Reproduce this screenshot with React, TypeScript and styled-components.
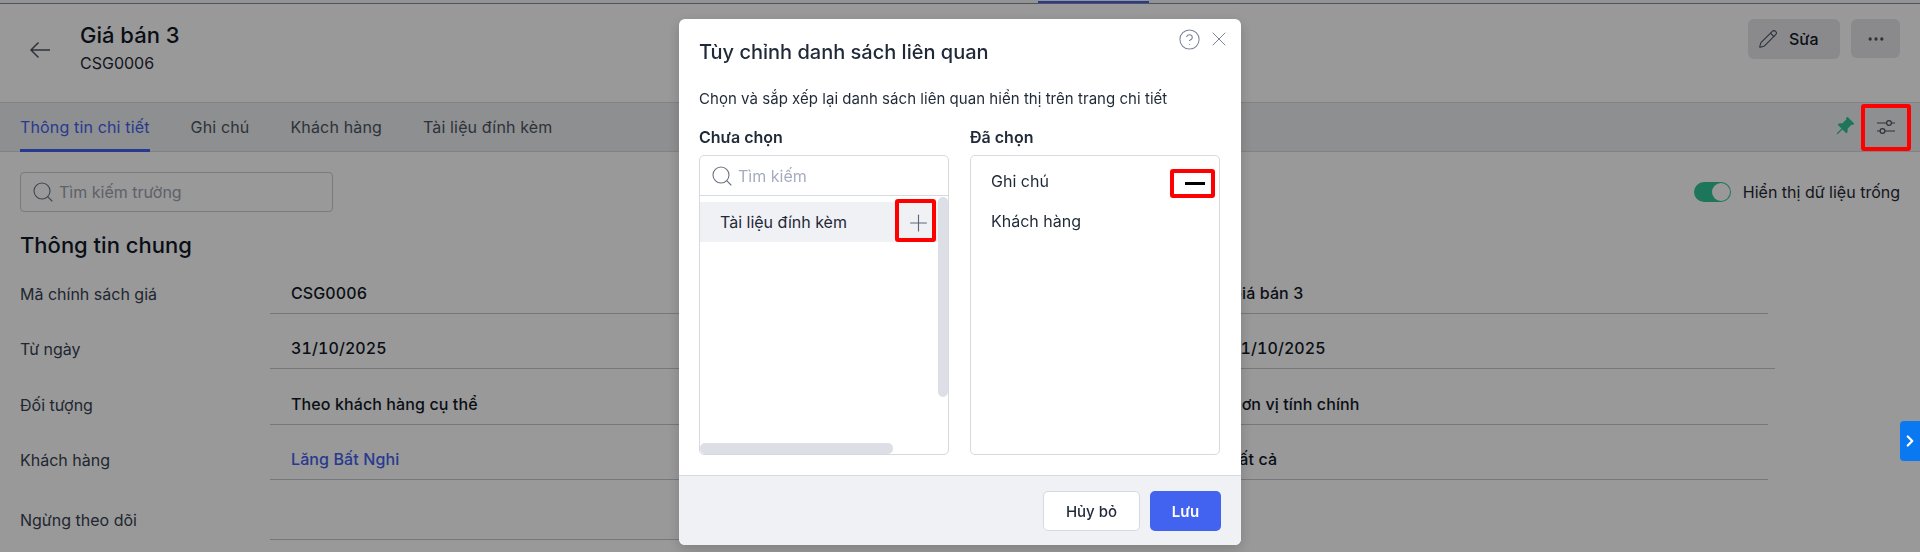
import React from "react";
import styled, { createGlobalStyle } from "styled-components";
import { Search, Pencil, Ellipsis, CircleHelp, X, Plus, ChevronRight } from "lucide-react";
import { BsPinAngleFill } from "react-icons/bs";

const Global = createGlobalStyle`
  html, body { margin: 0; padding: 0; height: 552px; overflow: hidden; background: #fff; }
  body { font-family: Inter, "Noto Sans", sans-serif; color: #1f2937; }
  * { box-sizing: border-box; }
`;

const Page = styled.div`
  position: relative;
  width: 1920px;
  height: 552px;
  overflow: hidden;
  background: #fff;
`;
const TopStrip = styled.div`
  height: 4px;
  padding: 1px 0 0 1038px;
  border-bottom: 1px solid #8a8d94;
  background: #f4f5f7;
`;
const TopMark = styled.div`
  width: 111px;
  height: 2px;
  background: #4262f0;
`;
const Header = styled.header`
  height: 99px;
  display: flex;
  align-items: flex-start;
  padding: 15px 20px 0 29px;
  border-bottom: 1px solid #d6d9df;
`;
const BackButton = styled.div`
  width: 51px;
  height: 18px;
  margin-top: 22px;
  color: #4b5563;
  display: flex;
  flex: none;
`;
const TitleBlock = styled.div`
  flex: 1;
  padding-top: 2px;
`;
const PageTitle = styled.div`
  font-size: 22px;
  font-weight: 500;
  line-height: 28px;
  color: #111827;
`;
const PageCode = styled.div`
  font-size: 16px;
  line-height: 20px;
  margin-top: 4px;
  color: #1f2937;
`;
const HeaderActions = styled.div`
  display: flex;
  gap: 11px;
`;
const EditButton = styled.div`
  width: 92px;
  height: 40px;
  border-radius: 6px;
  background: #e6e7eb;
  display: flex;
  align-items: center;
  gap: 11px;
  padding-left: 10px;
  font-size: 16px;
  font-weight: 500;
  color: #111827;
  svg { color: #4b5563; }
`;
const MoreButton = styled.div`
  width: 49px;
  height: 39px;
  border-radius: 6px;
  background: #e6e7eb;
  display: flex;
  align-items: center;
  justify-content: center;
  color: #4b5563;
`;
const TabBar = styled.nav`
  height: 49px;
  display: flex;
  align-items: stretch;
  padding-left: 20px;
  gap: 41px;
  background: #edeef1;
  border-bottom: 1px solid #d6d9df;
`;
const Tab = styled.div<{ $active?: boolean }>`
  display: flex;
  align-items: center;
  height: 49px;
  font-size: 16px;
  letter-spacing: 0.15px;
  color: ${(p) => (p.$active ? "#4262f0" : "#4b5563")};
  border-bottom: 3px solid ${(p) => (p.$active ? "#4262f0" : "transparent")};
  padding-top: 2px;
`;
const TabTools = styled.div`
  margin-left: auto;
  display: flex;
  align-items: center;
  padding-right: 9px;
`;
const PinIcon = styled.div`
  display: flex;
  color: #33c596;
  margin-right: 6px;
  padding-bottom: 2px;
`;
const SliderTool = styled.div`
  width: 50px;
  height: 47px;
  display: flex;
  align-items: center;
  justify-content: center;
  color: #4b5563;
  margin-bottom: 1px;
`;
const RedBox = styled.div`
  position: absolute;
  border: 4px solid #ff0000;
  border-radius: 3px;
  pointer-events: none;
`;
const ToolMark = styled(RedBox)`
  position: fixed;
  left: 1861px;
  top: 104px;
  width: 50px;
  height: 47px;
`;
const Content = styled.main`
  padding: 20px 20px 0;
`;
const Toolbar = styled.div`
  display: flex;
  justify-content: space-between;
  align-items: center;
  height: 40px;
`;
const FieldSearch = styled.div`
  width: 313px;
  height: 40px;
  border: 1px solid #c9ccd3;
  border-radius: 4px;
  display: flex;
  align-items: center;
  gap: 4px;
  padding-left: 10px;
  font-size: 16px;
  color: #9ca3af;
  svg { color: #6b7280; }
`;
const ToggleWrap = styled.div`
  display: flex;
  align-items: center;
  gap: 12px;
  font-size: 16px;
  color: #1f2937;
`;
const Toggle = styled.div`
  width: 37px;
  height: 20px;
  border-radius: 10px;
  background: #33c596;
  display: flex;
  justify-content: flex-end;
  padding: 1px;
`;
const Knob = styled.div`
  width: 18px;
  height: 18px;
  border-radius: 50%;
  background: #fff;
`;
const SectionTitle = styled.h2`
  margin: 20px 0 0;
  font-size: 22px;
  font-weight: 500;
  line-height: 26px;
  color: #111827;
`;
const FieldGrid = styled.div`
  display: grid;
  grid-template-columns: 809px 809px;
  column-gap: 130px;
`;
const Field = styled.div<{ $tall?: boolean }>`
  display: grid;
  grid-template-columns: 250px 1fr;
  height: ${(p) => (p.$tall ? 60 : 55.5)}px;
`;
const FieldLabel = styled.div<{ $tall?: boolean }>`
  font-size: 16px;
  color: #374151;
  padding-top: ${(p) => (p.$tall ? 29 : 24.5)}px;
  line-height: 22px;
`;
const FieldValue = styled.div<{ $link?: boolean; $wide?: boolean }>`
  font-size: 16px;
  font-weight: 450;
  font-variant-numeric: tabular-nums;
  letter-spacing: 0.1px;
  line-height: 22px;
  padding: 23.5px 0 0 21px;
  color: ${(p) => (p.$link ? "#4262f0" : "#111827")};
  border-bottom: 1px solid #c5c8ce;
  margin-right: ${(p) => (p.$wide ? "-7px" : "0")};
`;
const SideTab = styled.div`
  position: fixed;
  z-index: 5;
  right: 0;
  top: 421px;
  width: 20px;
  height: 40px;
  background: #0a78f0;
  color: #fff;
  border-radius: 4px 0 0 4px;
  display: flex;
  align-items: center;
  justify-content: center;
`;
const Backdrop = styled.div`
  position: fixed;
  inset: 0;
  background: rgba(0, 0, 0, 0.4);
`;
const Modal = styled.section`
  position: fixed;
  left: 679px;
  top: 19px;
  width: 562px;
  height: 526px;
  background: #fff;
  border-radius: 6px;
  display: flex;
  flex-direction: column;
  overflow: hidden;
  box-shadow: 0 4px 14px rgba(0, 0, 0, 0.18);
`;
const ModalTools = styled.div`
  position: absolute;
  top: 8px;
  right: 10px;
  display: flex;
  align-items: center;
  gap: 6px;
  color: #7b8498;
`;
const ModalBody = styled.div`
  flex: 1;
  padding: 20px 20px 20px;
`;
const ModalTitle = styled.h3`
  margin: 0;
  font-size: 20px;
  font-weight: 500;
  line-height: 26px;
  color: #1f2937;
`;
const ModalText = styled.p`
  margin: 23px 0 0;
  font-size: 15px;
  letter-spacing: 0.04px;
  line-height: 22px;
  color: #1f2937;
`;
const Columns = styled.div`
  display: grid;
  grid-template-columns: 250px 250px;
  column-gap: 21px;
  margin-top: 16px;
`;
const Column = styled.div`
  display: flex;
  flex-direction: column;
  gap: 7px;
`;
const ColumnTitle = styled.div`
  font-size: 16px;
  font-weight: 600;
  line-height: 22px;
  color: #1f2937;
`;
const ListBox = styled.div`
  position: relative;
  height: 300px;
  border: 1px solid #d5d9e0;
  border-radius: 5px;
  overflow: hidden;
`;
const ListSearch = styled.div`
  height: 40px;
  border-bottom: 1px solid #d5d9e0;
  display: flex;
  align-items: center;
  gap: 4px;
  padding-left: 10px;
  font-size: 16px;
  color: #a5adc0;
  svg { color: #6b7280; }
`;
const AvailableRow = styled.div`
  position: relative;
  width: 238px;
  height: 40px;
  margin-top: 6px;
  padding-left: 20px;
  background: #f0f1f4;
  display: flex;
  align-items: center;
  font-size: 16px;
  color: #1f2937;
`;
const PlusMark = styled(RedBox)`
  right: 2px;
  top: -3px;
  width: 41px;
  height: 43px;
  display: flex;
  align-items: center;
  justify-content: center;
  padding: 4px 0 0 6px;
  color: #5d6678;
`;
const ScrollY = styled.div`
  position: absolute;
  right: 0;
  top: 41px;
  width: 10px;
  height: 200px;
  border-radius: 5px;
  background: #dcdfe6;
`;
const ScrollX = styled.div`
  position: absolute;
  left: 0;
  bottom: 0;
  width: 193px;
  height: 11px;
  border-radius: 5px;
  background: #dcdfe6;
`;
const SelectedList = styled.div`
  padding-top: 5px;
`;
const SelectedRow = styled.div`
  position: relative;
  height: 40px;
  padding-left: 20px;
  display: flex;
  align-items: center;
  font-size: 16px;
  color: #1f2937;
`;
const MinusMark = styled(RedBox)`
  right: 4px;
  top: 8px;
  width: 45px;
  height: 29px;
  display: flex;
  align-items: center;
  justify-content: center;
  padding-left: 4px;
`;
const MinusBar = styled.div`
  width: 20px;
  height: 3px;
  background: #000;
`;
const ModalFooter = styled.footer`
  height: 71px;
  background: #f0f1f4;
  border-top: 1px solid #d5d9e0;
  display: flex;
  justify-content: flex-end;
  gap: 10px;
  padding: 15px 20px 0 0;
`;
const CancelButton = styled.div`
  width: 97px;
  height: 40px;
  border: 1px solid #d5d9e0;
  border-radius: 5px;
  background: #fff;
  display: flex;
  align-items: center;
  justify-content: center;
  font-size: 15px;
  font-weight: 500;
  color: #1f2937;
`;
const SaveButton = styled.div`
  width: 71px;
  height: 40px;
  border-radius: 5px;
  background: #4262f0;
  display: flex;
  align-items: center;
  justify-content: center;
  font-size: 15px;
  font-weight: 600;
  color: #fff;
`;

const SlidersIcon = () => (
  <svg width="20" height="16" viewBox="0 0 20 16" fill="none" stroke="currentColor" strokeWidth="1.2">
    <path d="M1 4h10M15.5 4H19M1 12h3.5M9 12h10" />
    <circle cx="13" cy="4" r="2.4" />
    <circle cx="6.5" cy="12" r="2.4" />
  </svg>
);

const BackIcon = () => (
  <svg width="22" height="18" viewBox="0 0 22 18" fill="none" stroke="currentColor" strokeWidth="1.5">
    <path d="M21 9H2M9.5 1.5 2 9l7.5 7.5" />
  </svg>
);

const rows: { l: string; v: string; link?: boolean; rl: string; rv: string; wide?: boolean }[] = [
  { l: "Mã chính sách giá", v: "CSG0006", rl: "Tên chính sách giá", rv: "Giá bán 3" },
  { l: "Từ ngày", v: "31/10/2025", rl: "Đến ngày", rv: "31/10/2025", wide: true },
  { l: "Đối tượng", v: "Theo khách hàng cụ thể", rl: "Tính giá theo", rv: "Đơn vị tính chính" },
  { l: "Khách hàng", v: "Lăng Bất Nghi", link: true, rl: "Hàng hóa", rv: "Tất cả" },
];

export default function App() {
  return (
    <Page>
      <Global />
      <TopStrip>
        <TopMark />
      </TopStrip>
      <Header>
        <BackButton>
          <BackIcon />
        </BackButton>
        <TitleBlock>
          <PageTitle>Giá bán 3</PageTitle>
          <PageCode>CSG0006</PageCode>
        </TitleBlock>
        <HeaderActions>
          <EditButton>
            <Pencil size={20} strokeWidth={1.3} />
            Sửa
          </EditButton>
          <MoreButton>
            <Ellipsis size={20} strokeWidth={2} />
          </MoreButton>
        </HeaderActions>
      </Header>
      <TabBar>
        <Tab $active>Thông tin chi tiết</Tab>
        <Tab>Ghi chú</Tab>
        <Tab>Khách hàng</Tab>
        <Tab>Tài liệu đính kèm</Tab>
        <TabTools>
          <PinIcon>
            <BsPinAngleFill size={20} />
          </PinIcon>
          <SliderTool>
            <SlidersIcon />
          </SliderTool>
        </TabTools>
      </TabBar>
      <Content>
        <Toolbar>
          <FieldSearch>
            <Search size={24} strokeWidth={1.1} />
            Tìm kiếm trường
          </FieldSearch>
          <ToggleWrap>
            <Toggle>
              <Knob />
            </Toggle>
            Hiển thị dữ liệu trống
          </ToggleWrap>
        </Toolbar>
        <SectionTitle>Thông tin chung</SectionTitle>
        <FieldGrid>
          {rows.map((r) => (
            <React.Fragment key={r.l}>
              <Field>
                <FieldLabel>{r.l}</FieldLabel>
                <FieldValue $link={r.link}>{r.v}</FieldValue>
              </Field>
              <Field>
                <FieldLabel>{r.rl}</FieldLabel>
                <FieldValue $wide={r.wide}>{r.rv}</FieldValue>
              </Field>
            </React.Fragment>
          ))}
          <Field $tall>
            <FieldLabel $tall>Ngừng theo dõi</FieldLabel>
            <FieldValue />
          </Field>
        </FieldGrid>
      </Content>
      <Backdrop />
      <ToolMark />
      <SideTab>
        <ChevronRight size={18} strokeWidth={3} />
      </SideTab>
      <Modal>
        <ModalTools>
          <CircleHelp size={23} strokeWidth={1.1} />
          <X size={24} strokeWidth={1} />
        </ModalTools>
        <ModalBody>
          <ModalTitle>Tùy chỉnh danh sách liên quan</ModalTitle>
          <ModalText>Chọn và sắp xếp lại danh sách liên quan hiển thị trên trang chi tiết</ModalText>
          <Columns>
            <Column>
              <ColumnTitle>Chưa chọn</ColumnTitle>
              <ListBox>
                <ListSearch>
                  <Search size={24} strokeWidth={1.1} />
                  Tìm kiếm
                </ListSearch>
                <AvailableRow>
                  Tài liệu đính kèm
                  <PlusMark>
                    <Plus size={28} strokeWidth={1} />
                  </PlusMark>
                </AvailableRow>
                <ScrollY />
                <ScrollX />
              </ListBox>
            </Column>
            <Column>
              <ColumnTitle>Đã chọn</ColumnTitle>
              <ListBox>
                <SelectedList>
                  <SelectedRow>
                    Ghi chú
                    <MinusMark>
                      <MinusBar />
                    </MinusMark>
                  </SelectedRow>
                  <SelectedRow>Khách hàng</SelectedRow>
                </SelectedList>
              </ListBox>
            </Column>
          </Columns>
        </ModalBody>
        <ModalFooter>
          <CancelButton>Hủy bỏ</CancelButton>
          <SaveButton>Lưu</SaveButton>
        </ModalFooter>
      </Modal>
    </Page>
  );
}
